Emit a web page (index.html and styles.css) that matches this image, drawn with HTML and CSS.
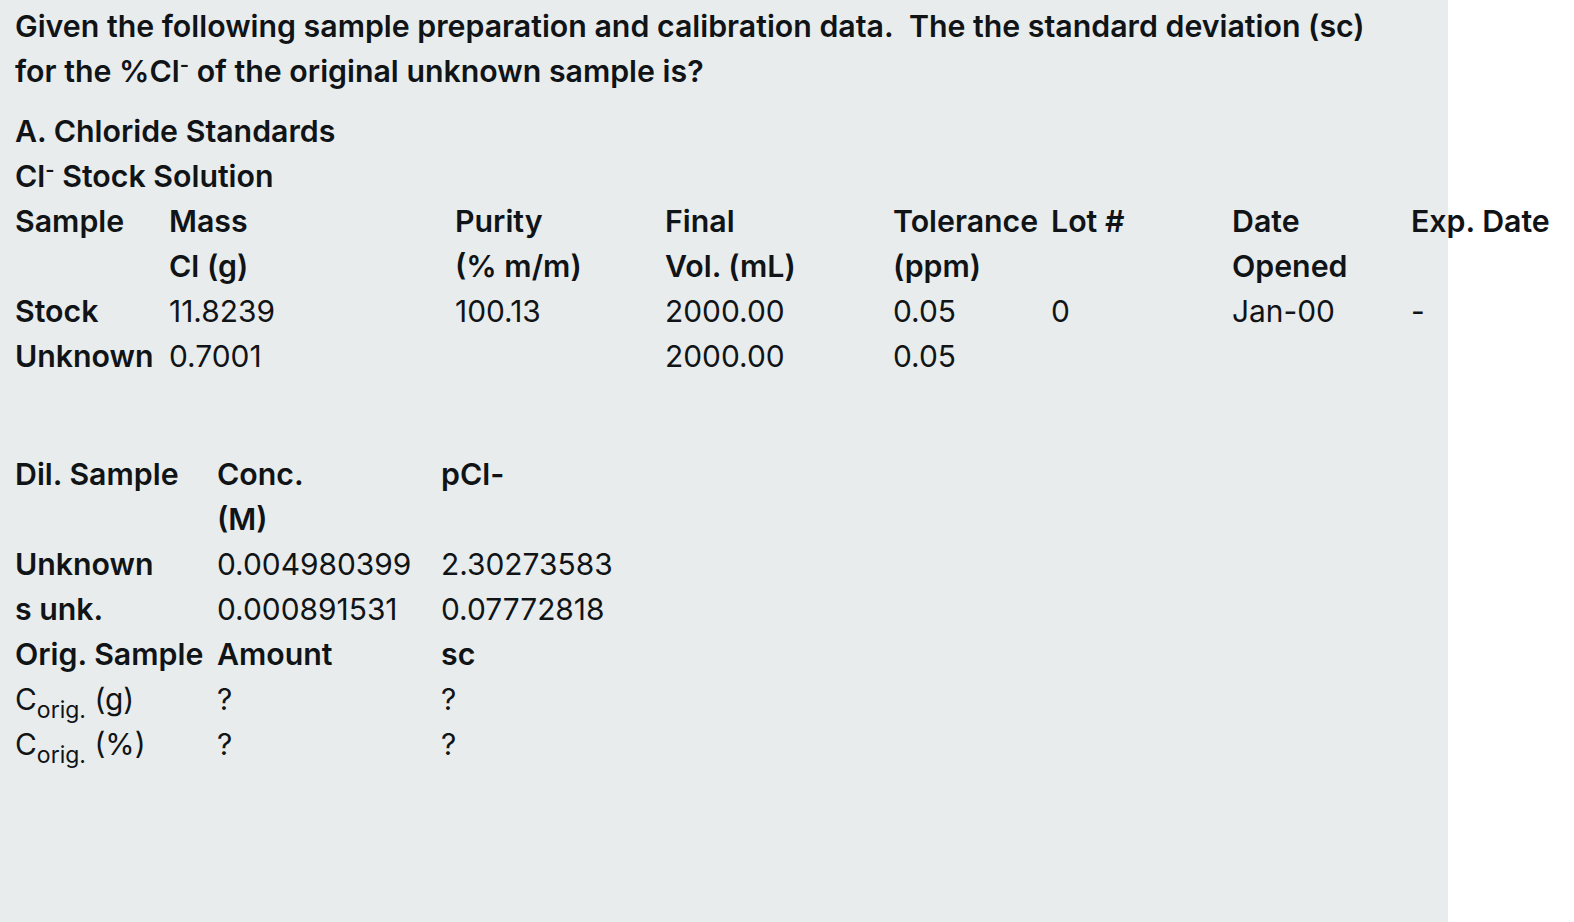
FILE: index.html
```html
<!DOCTYPE html>
<html>
<head>
<meta charset="utf-8">
<link rel="stylesheet" href="styles.css">
</head>
<body>
<div class="panel">
  <p class="title">Given the following sample preparation and calibration data.&nbsp; The the standard deviation (sc)<br>for the %Cl<sup>-</sup> of the original unknown sample is?</p>
  <div class="section">
    <div class="b">A. Chloride Standards</div>
    <div class="b">Cl<sup>-</sup> Stock Solution</div>
  </div>
  <div class="grid g1">
    <div class="b">Sample</div><div class="b">Mass</div><div class="b">Purity</div><div class="b">Final</div><div class="b">Tolerance</div><div class="b">Lot #</div><div class="b">Date</div><div class="b">Exp. Date</div>
    <div></div><div class="b">Cl (g)</div><div class="b">(% m/m)</div><div class="b">Vol. (mL)</div><div class="b">(ppm)</div><div></div><div class="b">Opened</div><div></div>
    <div class="b">Stock</div><div>11.8239</div><div>100.13</div><div>2000.00</div><div>0.05</div><div>0</div><div>Jan-00</div><div>-</div>
    <div class="b">Unknown</div><div>0.7001</div><div></div><div>2000.00</div><div>0.05</div><div></div><div></div><div></div>
  </div>
  <div class="grid g2">
    <div class="b">Dil. Sample</div><div class="b">Conc.</div><div class="b">pCl-</div>
    <div></div><div class="b">(M)</div><div></div>
    <div class="b">Unknown</div><div>0.004980399</div><div>2.30273583</div>
    <div class="b">s unk.</div><div>0.000891531</div><div>0.07772818</div>
    <div class="b">Orig. Sample</div><div class="b">Amount</div><div class="b">sc</div>
    <div>C<sub>orig.</sub> (g)</div><div>?</div><div>?</div>
    <div>C<sub>orig.</sub> (%)</div><div>?</div><div>?</div>
  </div>
</div>
</body>
</html>
```
FILE: styles.css
```css
html, body {
  margin: 0;
  padding: 0;
  background: #ffffff;
}
body {
  font-family: Inter, "Noto Sans", sans-serif;
  font-size: 29.9px;
  line-height: 45px;
  color: #111416;
}
.panel {
  width: 1448px;
  height: 922px;
  box-sizing: border-box;
  background: #e8eced;
  padding: 4px 0 0 15px;
  white-space: nowrap;
}
.title {
  margin: 0;
  font-weight: 600;
  font-size: 30.3px;
}
.section {
  margin-top: 15px;
}
.b {
  font-weight: 600;
  font-size: 30.3px;
}
sup {
  font-size: 20px;
  line-height: 0;
  vertical-align: 10px;
}
sub {
  font-size: 23px;
  line-height: 0;
  vertical-align: -8px;
}
.grid {
  display: grid;
}
.g1 {
  grid-template-columns: 154px 286px 210px 228px 158px 181px 179px 170px;
}
.g2 {
  margin-top: 73px;
  grid-template-columns: 202px 224px 200px;
}
```
